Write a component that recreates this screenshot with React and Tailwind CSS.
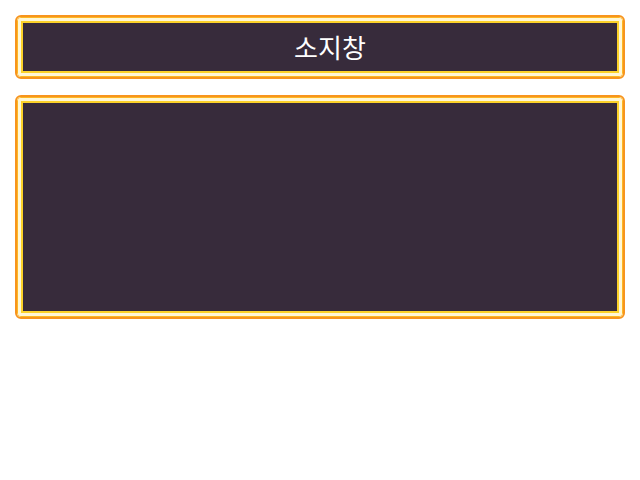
function Frame({ className, children }) {
  return (
    <div className={`rounded-[6px] border-2 border-[#f7941d] ${className}`}>
      <div className="h-full rounded-[4px] border border-[#fdb822]">
        <div className="h-full rounded-[3px] border-[3px] border-[#fff7d6]">
          <div className="h-full border-2 border-[#fcd22a] bg-[#372b3b]">{children}</div>
        </div>
      </div>
    </div>
  );
}

export default function App() {
  return (
    <div className="flex w-[640px] flex-col gap-4 p-[15px] font-['Noto_Sans_CJK_KR',sans-serif]">
      <Frame className="h-16">
        <div className="flex h-full items-center justify-center pb-0.5 pl-5 text-[26px] text-white">소지창</div>
      </Frame>
      <Frame className="h-[224px]" />
    </div>
  );
}
